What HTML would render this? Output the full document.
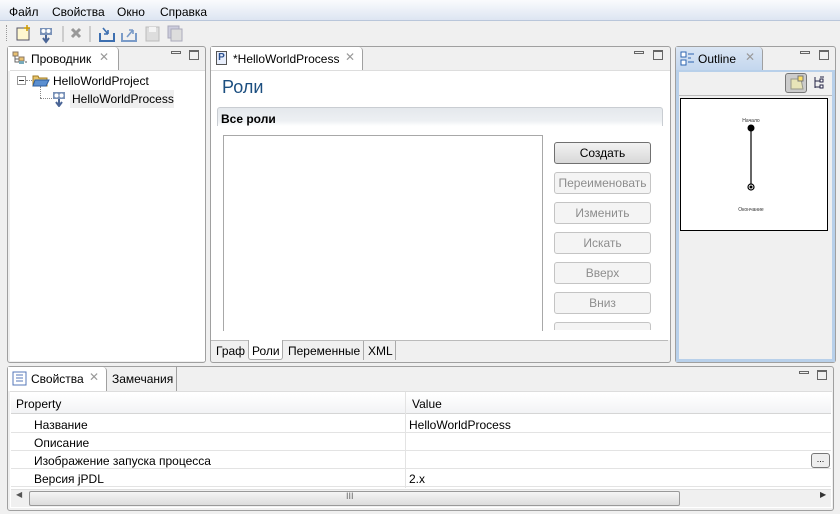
<!DOCTYPE html>
<html><head><meta charset="utf-8"><style>
*{box-sizing:border-box;margin:0;padding:0}
body{width:840px;height:514px;overflow:hidden;background:#f0f0f0;font-family:"Liberation Sans","DejaVu Sans",sans-serif;font-size:12px;color:#000;position:relative}
.a{position:absolute}
.t{white-space:nowrap}
.btn{position:absolute;left:554px;width:97px;height:22px;border:1px solid #c4c4c4;border-radius:3px;background:#f4f4f4;color:#8d8d8d;text-align:center;line-height:20px;font-size:12px}
.mm{position:absolute;width:10px;height:3px;border:1px solid #666}
.mx{position:absolute;width:10px;height:10px;border:1px solid #666;border-top-width:2px}
.row{position:absolute;left:11px;width:820px;height:18px;border-bottom:1px solid #e3e3e3;background:#fff}
</style></head><body>
<!-- menu bar -->
<div class="a" style="left:0;top:0;width:840px;height:21px;background:linear-gradient(#fafbfd,#dde5f2);border-bottom:1px solid #b9c6da"></div>
<div class="a t" style="left:9px;top:5px">Файл</div>
<div class="a t" style="left:52px;top:5px">Свойства</div>
<div class="a t" style="left:117px;top:5px">Окно</div>
<div class="a t" style="left:160px;top:5px">Справка</div>
<!-- toolbar -->
<div class="a" style="left:6px;top:25px;width:2px;height:16px;border-left:1px dotted #999"></div>
<svg class="a" style="left:14px;top:24px" width="170" height="20">
<rect x="3" y="4" width="12" height="12" fill="#fff8d0" stroke="#556" />
<path d="M13 1v6M10 4h6" stroke="#c90" stroke-width="1.5"/>
<g transform="translate(24,2)"><rect x="2" y="2" width="12" height="7" fill="#7a92b8"/><circle cx="5.5" cy="5" r="2" fill="#fff"/><circle cx="10.5" cy="5" r="2" fill="#fff"/><path d="M8 9v6M5 12l3 4 3-4" stroke="#4a6596" stroke-width="2" fill="none"/></g>
<line x1="49" y1="2" x2="49" y2="18" stroke="#aaa"/>
<path d="M58 5l8 8M66 5l-8 8" stroke="#999" stroke-width="3"/>
<line x1="76" y1="2" x2="76" y2="18" stroke="#aaa"/>
<path d="M86 9v8h14v-8" stroke="#3d6fb0" stroke-width="2" fill="none"/><path d="M89 4l5 6M94 10h-4M94 10v-4" stroke="#3d6fb0" stroke-width="1.6" fill="none"/>
<path d="M108 9v8h14v-8" stroke="#7a9bc8" stroke-width="2" fill="none"/><path d="M113 13l6-7M119 6h-4M119 6v4" stroke="#7a9bc8" stroke-width="1.6" fill="none"/>
<rect x="132" y="3" width="13" height="14" fill="#ddd" stroke="#bbb"/><rect x="135" y="3" width="7" height="5" fill="#f4f4f4"/>
<rect x="154" y="2" width="11" height="12" fill="#ccd" stroke="#aab"/><rect x="157" y="5" width="11" height="12" fill="#ddd" stroke="#aab"/>
</svg>
<!-- left panel -->
<div class="a" style="left:7px;top:46px;width:199px;height:317px;border:1px solid #a0a0a0;border-radius:3px;background:#f0f0f0"></div>
<div class="a" style="left:8px;top:47px;width:111px;height:24px;background:#fff;border-right:1px solid #a0a0a0;border-top-right-radius:4px"></div>
<div class="a" style="left:10px;top:70px;width:195px;height:291px;background:#fff;border-top:1px solid #ddd"></div>
<svg class="a" style="left:12px;top:51px" width="16" height="14"><rect x="1" y="1" width="5" height="4" fill="#e8c070" stroke="#876"/><path d="M3 5v6h4M3 8h4" stroke="#666" fill="none"/><rect x="7" y="6" width="5" height="4" fill="#e8c070" stroke="#876"/><rect x="7" y="10" width="5" height="3" fill="#7ab" /><path d="M13 11h2" stroke="#555"/></svg>
<div class="a t" style="left:31px;top:52px">Проводник</div>
<div class="a t" style="left:99px;top:50px;color:#999;font-size:12px">✕</div>
<div class="mm" style="left:171px;top:51px"></div><div class="mx" style="left:189px;top:50px"></div>
<div class="a" style="left:17px;top:76px;width:9px;height:9px;border:1px solid #999;background:#fff"></div>
<div class="a" style="left:19px;top:80px;width:5px;height:1px;background:#333"></div>
<div class="a" style="left:26px;top:80px;width:6px;border-top:1px dotted #888"></div>
<div class="a" style="left:40px;top:86px;height:12px;border-left:1px dotted #888"></div>
<div class="a" style="left:40px;top:98px;width:12px;border-top:1px dotted #888"></div>
<svg class="a" style="left:32px;top:73px" width="18" height="14"><path d="M1 3h5l1 2h8v8H1z" fill="#e7c46a" stroke="#a07a20"/><path d="M3 7h14l-3 6H1z" fill="#5b8fd0" stroke="#2e5e9e"/></svg>
<div class="a t" style="left:53px;top:74px">HelloWorldProject</div>
<svg class="a" style="left:52px;top:91px" width="14" height="16"><rect x="1" y="1" width="12" height="7" fill="#7a92b8"/><circle cx="4.5" cy="4.5" r="2" fill="#fff"/><circle cx="9.5" cy="4.5" r="2" fill="#fff"/><path d="M7 8v6M4 11l3 4 3-4" stroke="#4a6596" stroke-width="2" fill="none"/></svg>
<div class="a" style="left:70px;top:90px;width:104px;height:18px;background:#efefef"></div>
<div class="a t" style="left:72px;top:92px">HelloWorldProcess</div>
<!-- editor -->
<div class="a" style="left:210px;top:46px;width:461px;height:317px;border:1px solid #a0a0a0;border-radius:3px;background:#f0f0f0"></div>
<div class="a" style="left:211px;top:47px;width:152px;height:24px;background:#fff;border-right:1px solid #a0a0a0;border-top-right-radius:4px"></div>
<div class="a" style="left:211px;top:70px;width:459px;height:270px;background:#fff;border-top:1px solid #ddd"></div>
<div class="a" style="left:216px;top:51px;width:11px;height:14px;border:1px solid #555;background:#e8eefb;color:#2a4f8f;font-size:10px;font-weight:bold;line-height:12px;text-align:center">P</div>
<div class="a t" style="left:233px;top:52px">*HelloWorldProcess</div>
<div class="a t" style="left:345px;top:50px;color:#999">✕</div>
<div class="mm" style="left:634px;top:51px"></div><div class="mx" style="left:653px;top:50px"></div>
<div class="a t" style="left:222px;top:77px;font-size:18px;color:#1c4f80">Роли</div>
<div class="a" style="left:217px;top:107px;width:446px;height:19px;border:1px solid #c9cdd2;border-bottom:none;border-radius:3px 3px 0 0;background:linear-gradient(#e4e8ec,#edf0f3 70%,#fff)"></div>
<div class="a t" style="left:221px;top:112px;font-weight:bold">Все роли</div>
<div class="a" style="left:223px;top:135px;width:320px;height:196px;border:1px solid #a8a8a8;border-bottom:none;background:#fff"></div>
<div class="btn" style="top:142px;border-color:#707070;background:linear-gradient(#f2f2f2,#d8d8d8);color:#000">Создать</div>
<div class="btn" style="top:172px">Переименовать</div>
<div class="btn" style="top:202px">Изменить</div>
<div class="btn" style="top:232px">Искать</div>
<div class="btn" style="top:262px">Вверх</div>
<div class="btn" style="top:292px">Вниз</div>
<div class="a" style="left:554px;top:322px;width:97px;height:8px;border:1px solid #c4c4c4;border-bottom:none;border-radius:3px 3px 0 0;background:#f4f4f4"></div>
<div class="a" style="left:211px;top:340px;width:457px;height:20px;background:#f0f0f0;border-top:1px solid #bbb"></div>
<div class="a" style="left:248px;top:340px;width:35px;height:20px;background:#fff;border:1px solid #aaa;border-top:none;border-radius:0 0 3px 3px"></div>
<div class="a" style="left:363px;top:341px;height:19px;border-left:1px solid #aaa"></div>
<div class="a" style="left:395px;top:341px;height:19px;border-left:1px solid #aaa"></div>
<div class="a t" style="left:216px;top:344px">Граф</div>
<div class="a t" style="left:252px;top:344px">Роли</div>
<div class="a t" style="left:288px;top:344px">Переменные</div>
<div class="a t" style="left:368px;top:344px">XML</div>
<!-- outline -->
<div class="a" style="left:675px;top:46px;width:161px;height:317px;border:1px solid #a0a0a0;border-radius:3px;background:#f0f0f0"></div>
<div class="a" style="left:676px;top:47px;width:87px;height:24px;background:linear-gradient(#dbe6f4,#c3d6ee);border-right:1px solid #a0a0a0;border-top-right-radius:4px"></div>
<div class="a" style="left:676px;top:70px;width:159px;height:292px;border:3px solid #b8d0ea;border-top:2px solid #b8d0ea;background:#f0f0f0"></div>
<div class="a" style="left:679px;top:95px;width:153px;height:1px;background:#bbb"></div>
<svg class="a" style="left:680px;top:51px" width="16" height="16"><rect x="1" y="1" width="5" height="5" fill="#fff" stroke="#2d64b0"/><rect x="1" y="9" width="5" height="5" fill="#fff" stroke="#2d64b0"/><path d="M8 3h6M8 7h3M8 11h6" stroke="#2d64b0"/></svg>
<div class="a t" style="left:698px;top:52px">Outline</div>
<div class="a t" style="left:745px;top:50px;color:#999">✕</div>
<div class="mm" style="left:800px;top:51px"></div><div class="mx" style="left:819px;top:50px"></div>
<div class="a" style="left:785px;top:73px;width:22px;height:20px;border:1px solid #777;border-radius:3px;background:#ccc"></div>
<svg class="a" style="left:789px;top:75px" width="16" height="16"><path d="M2 4h10l2 10H2z" fill="#e8e4b8" stroke="#998"/><rect x="9" y="1" width="5" height="5" fill="#ffe066" stroke="#777"/></svg>
<svg class="a" style="left:813px;top:76px" width="12" height="14"><path d="M2 1v11M2 5h5M2 11h5M7 1h4" stroke="#224" fill="none"/><rect x="7" y="3" width="3" height="3" fill="#fff" stroke="#224"/><rect x="7" y="9" width="3" height="3" fill="#fff" stroke="#224"/></svg>
<div class="a" style="left:680px;top:98px;width:148px;height:133px;border:1px solid #000;background:#fff"></div>
<svg class="a" style="left:680px;top:98px" width="148" height="133">
<text x="71" y="24" font-size="5" text-anchor="middle" fill="#333" font-family="Liberation Sans">Начало</text>
<circle cx="71" cy="30" r="3.5" fill="#000"/><line x1="71" y1="30" x2="71" y2="88" stroke="#000" stroke-width="1.2"/>
<circle cx="71" cy="89" r="3" fill="#fff" stroke="#000" stroke-width="1.2"/><circle cx="71" cy="89" r="1.5" fill="#000"/>
<text x="71" y="113" font-size="5" text-anchor="middle" fill="#333" font-family="Liberation Sans">Окончание</text>
</svg>
<!-- properties -->
<div class="a" style="left:7px;top:366px;width:827px;height:145px;border:1px solid #a0a0a0;border-radius:3px;background:#f0f0f0"></div>
<div class="a" style="left:8px;top:367px;width:99px;height:24px;background:#fff;border-right:1px solid #a0a0a0;border-top-right-radius:4px"></div>
<div class="a" style="left:107px;top:367px;width:70px;height:24px;border-right:1px solid #a0a0a0"></div>
<svg class="a" style="left:12px;top:371px" width="16" height="16"><rect x="1" y="1" width="13" height="13" fill="#fff" stroke="#5477b8"/><path d="M4 4h7M4 7h7M4 10h7" stroke="#5477b8"/></svg>
<div class="a t" style="left:31px;top:372px">Свойства</div>
<div class="a t" style="left:89px;top:370px;color:#999">✕</div>
<div class="a t" style="left:112px;top:372px">Замечания</div>
<div class="mm" style="left:799px;top:371px"></div><div class="mx" style="left:817px;top:370px"></div>
<div class="a" style="left:10px;top:391px;width:822px;height:117px;background:#fff;border-top:1px solid #ddd"></div>
<div class="a" style="left:11px;top:394px;width:820px;height:20px;background:linear-gradient(#fff,#f2f3f5);border-bottom:1px solid #d5d5d5"></div>
<div class="a" style="left:405px;top:392px;height:96px;border-left:1px solid #e3e3e3"></div>
<div class="a t" style="left:16px;top:397px">Property</div>
<div class="a t" style="left:412px;top:397px">Value</div>
<div class="row" style="top:415px"></div><div class="row" style="top:433px"></div><div class="row" style="top:451px"></div><div class="row" style="top:469px"></div>
<div class="a" style="left:405px;top:415px;height:73px;border-left:1px solid #e3e3e3"></div>
<div class="a t" style="left:34px;top:418px">Название</div>
<div class="a t" style="left:409px;top:418px">HelloWorldProcess</div>
<div class="a t" style="left:34px;top:436px">Описание</div>
<div class="a t" style="left:34px;top:454px">Изображение запуска процесса</div>
<div class="a" style="left:811px;top:453px;width:19px;height:15px;border:1px solid #777;border-radius:3px;background:#eee;font-size:9px;text-align:center;line-height:10px">...</div>
<div class="a t" style="left:34px;top:472px">Версия jPDL</div>
<div class="a t" style="left:409px;top:472px">2.x</div>
<div class="a" style="left:11px;top:489px;width:820px;height:18px;background:#f0f0f0;border-top:1px solid #e0e0e0"></div>
<div class="a t" style="left:16px;top:490px;font-size:8px;color:#555">◀</div>
<div class="a" style="left:29px;top:491px;width:651px;height:15px;border:1px solid #999;border-radius:2px;background:linear-gradient(#f5f5f5,#dcdcdc)"></div>
<div class="a t" style="left:346px;top:491px;font-size:9px;color:#666">III</div>
<div class="a t" style="left:820px;top:490px;font-size:8px;color:#333">▶</div>
</body></html>
